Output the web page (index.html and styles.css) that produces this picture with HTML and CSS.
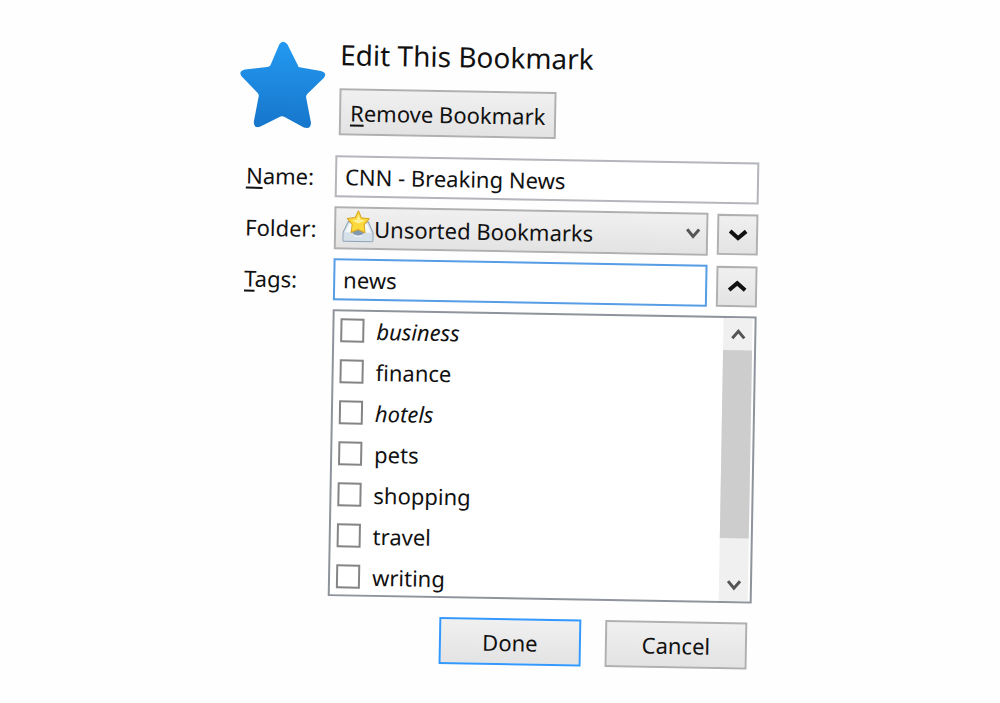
FILE: index.html
```html
<!DOCTYPE html>
<html lang="en">
<head>
<meta charset="UTF-8" />
<meta name="viewport" content="width=device-width, initial-scale=1.0" />
<title>Edit This Bookmark</title>
<link rel="stylesheet" href="styles.css">
</head>
<body>
<form class="panel">
  <header class="panel-header">
    <svg class="star" viewBox="0 0 86 87" aria-hidden="true">
      <defs>
        <linearGradient id="star-fill" x1="0" y1="0" x2="0" y2="1">
          <stop offset="0" stop-color="#2499f1" />
          <stop offset="1" stop-color="#1676cb" />
        </linearGradient>
      </defs>
      <path fill="url(#star-fill)" d="M39 3Q43-2 47 3L58 24Q58 26 61 26L81 29Q88 31 84 36L68 52Q66 54 67 57L72 81Q72 88 65 86L46 76Q43 74 40 76L21 86Q14 88 15 80L19 57Q20 54 18 52L2 36Q-2 31 5 29L27 26Q30 26 31 23Z" />
    </svg>
    <div class="panel-heading">
      <h1>Edit This Bookmark</h1>
      <button type="button" class="btn btn-remove" accesskey="r"><span><u>R</u>emove Bookmark</span></button>
    </div>
  </header>

  <div class="fields">
    <label for="name"><u>N</u>ame:</label>
    <input type="text" id="name" class="wide" value="CNN - Breaking News">

    <label for="folder">Folder:</label>
    <div class="folder">
      <svg class="folder-icon" viewBox="0 0 32 32" aria-hidden="true">
        <path fill="#d5e0e9" stroke="#8ea3b5" d="M6 11h20l5 11v8q0 1-1 1H2q-1 0-1-1v-8z" />
        <path fill="#f4f8fb" d="M7 13h18l4 9h-7l-3 4h-6l-3-4H3z" />
        <ellipse cx="16" cy="21" rx="6" ry="4" fill="#8499ad" />
        <path fill="#fbd83c" stroke="#d9a420" stroke-linejoin="round" d="M16 0l3 7 8 1-5 6 1 8-7-3-7 3 1-8-5-6 8-1z" />
        <path fill="#fff09a" d="M16 4l2 5 5 1-7 3-6-3 5-1z" />
      </svg>
      <select id="folder">
        <option>Unsorted Bookmarks</option>
      </select>
      <svg class="folder-arrow" viewBox="0 0 16 12" aria-hidden="true"><path d="M2 2l6 7 6-7" /></svg>
    </div>
    <button type="button" class="btn expander" aria-label="Show all folders">
      <svg viewBox="0 0 20 12" aria-hidden="true"><path d="M2 2l8 7 8-7" /></svg>
    </button>

    <label for="tags"><u>T</u>ags:</label>
    <input type="text" id="tags" class="focused" value="news">
    <button type="button" class="btn expander" aria-label="Hide tags">
      <svg viewBox="0 0 20 12" aria-hidden="true"><path d="M2 10l8-7 8 7" /></svg>
    </button>

    <div class="tag-box">
      <ul class="tag-list">
        <li><label><input type="checkbox"><em>business</em></label></li>
        <li><label><input type="checkbox">finance</label></li>
        <li><label><input type="checkbox"><em>hotels</em></label></li>
        <li><label><input type="checkbox">pets</label></li>
        <li><label><input type="checkbox">shopping</label></li>
        <li><label><input type="checkbox">travel</label></li>
        <li><label><input type="checkbox">writing</label></li>
      </ul>
      <div class="scrollbar">
        <button type="button" aria-label="Scroll up"><svg viewBox="0 0 16 12" aria-hidden="true"><path d="M2 10l6-7 6 7" /></svg></button>
        <div class="track"><div class="thumb"></div></div>
        <button type="button" aria-label="Scroll down"><svg viewBox="0 0 16 12" aria-hidden="true"><path d="M2 2l6 7 6-7" /></svg></button>
      </div>
    </div>
  </div>

  <footer class="actions">
    <button type="submit" class="btn btn-default">Done</button>
    <button type="button" class="btn">Cancel</button>
  </footer>
</form>
</body>
</html>
```
FILE: styles.css
```css
:root {
  --font-body: "Noto Sans", "Open Sans", sans-serif;
  --color-text: #111;
  --color-border: #b0b0b0;
  --color-field-border: #b4b6bc;
  --color-list-border: #8f949c;
  --color-focus: #569de5;
}

* { box-sizing: border-box; }

body {
  margin: 0;
  min-height: 100vh;
  display: flex; align-items: center; justify-content: center;
  padding: 0 19px 0 10px;
  font-family: var(--font-body);
  font-size: 22px; line-height: 30px;
  color: var(--color-text); background: #fefefe;
}

button, input, select {
  font: inherit; color: inherit;
}

/* the panel is tilted slightly clockwise */
.panel {
  width: 100%; max-width: 521px;
  transform: rotate(1deg);
}

.panel-header {
  display: flex; gap: 14px;
  margin-bottom: 20px;
}
.star {
  flex: none;
  width: 86px; height: 87px;
  margin-top: 6px;
}
.panel-heading h1 {
  margin: 0 0 16px;
  font-size: 28px; line-height: 36px; font-weight: normal;
}

u {
  text-decoration-thickness: 2px;
  text-underline-offset: 3px;
}

/* buttons */
.btn {
  height: 47px; padding: 0;
  border: 2px solid var(--color-border);
  background: linear-gradient(#f0f0f0, #e3e3e3);
}
.btn-remove {
  padding: 0 9px;
}
.btn-default {
  border-color: #3399ff;
}

/* form rows */
.fields {
  display: grid;
  grid-template-columns: 88px 1fr 41px;
  gap: 9px;
  align-items: center;
}
.fields > label {
  padding-left: 8px;
}
.fields > input {
  width: 100%; height: 42px; padding: 0 8px;
  border: 2px solid var(--color-field-border);
  background: #fff; outline: none;
}
.fields > .wide {
  grid-column: 2 / 4;
}
.fields > .focused {
  border-color: var(--color-focus);
}
.expander {
  display: flex; align-items: center; justify-content: center;
  height: 41px;
}
.expander svg {
  width: 20px; height: 12px;
}
svg path[d]:not([fill]) {
  fill: none; stroke: #111; stroke-width: 4;
}

.folder {
  position: relative;
}
.folder select {
  display: block;
  width: 100%; height: 43px; padding: 0 38px 0 38px;
  appearance: none;
  border: 2px solid var(--color-border); border-radius: 0;
  background: linear-gradient(#f0f0f0, #e3e3e3);
}
.folder-icon {
  position: absolute; left: 8px; top: 4px;
  width: 32px; height: 32px;
  pointer-events: none;
}
.folder-arrow {
  position: absolute; right: 7px; top: 15px;
  width: 16px; height: 12px;
  pointer-events: none;
}
.folder-arrow path[d]:not([fill]), .scrollbar path[d]:not([fill]) {
  stroke: #555; stroke-width: 3;
}

/* tag list */
.tag-box {
  grid-column: 2 / 4;
  display: flex;
  padding-right: 2px;
  border: 2px solid var(--color-list-border);
  background: #fff;
  overflow: hidden;
}
.tag-list {
  flex: 1;
  margin: -2px 0; padding: 0 0 0 6px;
  list-style: none;
}
.tag-list label {
  display: flex; align-items: center; gap: 12px;
  height: 41px;
}
.tag-list input {
  appearance: none;
  width: 24px; height: 24px; margin: 0;
  border: 2px solid #858585;
  background: #fff;
}
.tag-list input:checked {
  background: #707070;
}

.scrollbar {
  display: flex; flex-direction: column;
  width: 29px;
  background: #f0f0f0;
}
.scrollbar button {
  display: flex; align-items: center; justify-content: center;
  height: 32px; padding: 0;
  border: none; background: none;
}
.scrollbar svg {
  width: 16px; height: 12px;
}
.track {
  flex: 1;
}
.thumb {
  height: 86%;
  background: #cdcdcd;
}

.actions {
  display: flex; justify-content: flex-end; gap: 24px;
  margin-top: 19px; padding-right: 4px;
}
.actions .btn {
  width: 142px;
}
```
